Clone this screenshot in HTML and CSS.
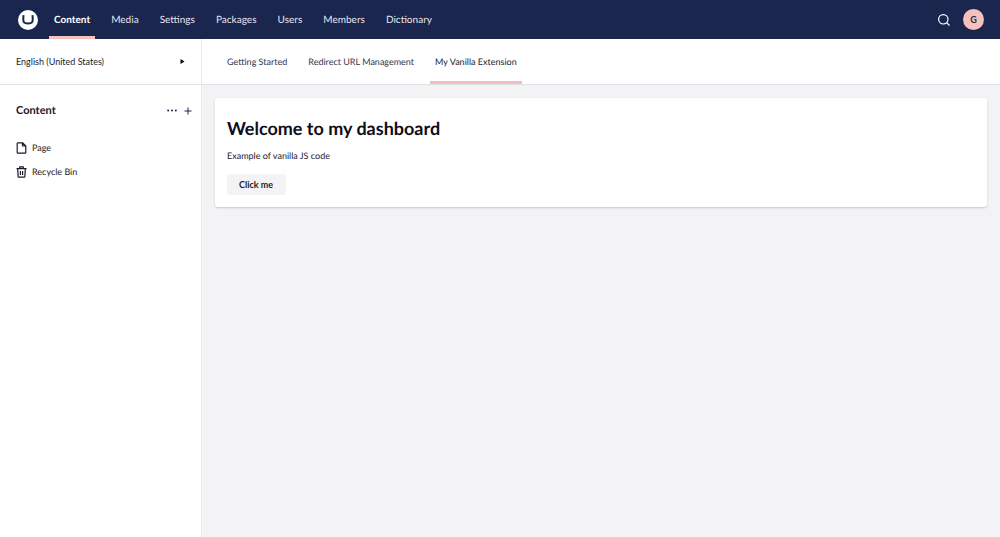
FILE: index.html
```html
<!DOCTYPE html>
<html lang="en">
<head>
<meta charset="utf-8">
<title>My Vanilla Extension</title>
<link rel="stylesheet" href="styles.css">
</head>
<body>
<header class="topbar">
  <a class="logo" href="#" aria-label="Home">
    <svg width="20" height="20" viewBox="0 0 20 20"><circle cx="10" cy="10" r="10" fill="#fff"/><path d="M5.500 5.200C4.800 12 5.300 13.500 10 13.500S15.200 12 14.500 5.200" fill="none" stroke="#1b264f" stroke-width="2"/></svg>
  </a>
  <nav class="sections">
    <a class="section active" href="#">Content</a>
    <a class="section" href="#">Media</a>
    <a class="section" href="#">Settings</a>
    <a class="section" href="#">Packages</a>
    <a class="section" href="#">Users</a>
    <a class="section" href="#">Members</a>
    <a class="section" href="#">Dictionary</a>
  </nav>
  <button class="icon-button search" aria-label="Search">
    <svg width="14" height="14" viewBox="0 0 14 14" fill="none" stroke="#fff" stroke-width="1.200"><circle cx="6.300" cy="6.300" r="4.700"/><path d="M9.700 9.700l2.800 2.800"/></svg>
  </button>
  <button class="avatar" aria-label="Account">G</button>
</header>
<div class="workspace">
  <aside class="sidebar">
    <button class="language"><span>English (United States)</span>
      <svg width="5" height="6" viewBox="0 0 5 6"><path d="M.5 0L4.500 2.500L.5 5z" fill="#060606"/></svg>
    </button>
    <div class="tree-head">
      <h2 class="tree-title">Content</h2>
      <button class="icon-button" aria-label="More actions"><svg width="10" height="10" viewBox="0 0 10 10" fill="#1b264f"><circle cx="1.200" cy="4.500" r="1"/><circle cx="5" cy="4.500" r="1"/><circle cx="8.800" cy="4.500" r="1"/></svg></button>
      <button class="icon-button" aria-label="Create"><svg width="8" height="8" viewBox="0 0 8 8" stroke="#1b264f"><path d="M4 0.500v7M0.500 4h7"/></svg></button>
    </div>
    <ul class="tree">
      <li><a class="node" href="#"><svg width="11" height="12" viewBox="0 0 11 12" fill="none" stroke="#1b1b2c" stroke-width="1.200" stroke-linejoin="round"><path d="M6.500 .8H2Q1.200.8 1.200 1.600v8.800q0 .8.800.8h7q.8 0 .8-.8V4zM6.500.8V4h3.300"/></svg>Page</a></li>
      <li><a class="node" href="#"><svg width="11" height="12" viewBox="0 0 11 12" fill="none" stroke="#1b1b2c" stroke-width="1.200" stroke-linejoin="round"><path d="M.5 2.700h10M3.700 2.700V.8h3.600v1.900M1.700 2.700l.4 7.700q0 .8.800.8h5.200q.8 0 .8-.8l.4-7.700M4.400 5v4M6.600 5v4"/></svg>Recycle Bin</a></li>
    </ul>
  </aside>
  <main class="main">
    <nav class="tabs">
      <a class="tab" href="#">Getting Started</a>
      <a class="tab" href="#">Redirect URL Management</a>
      <a class="tab active" href="#">My Vanilla Extension</a>
    </nav>
    <section class="box">
      <h1 class="box-title">Welcome to my dashboard</h1>
      <p class="box-text">Example of vanilla JS code</p>
      <button class="action">Click me</button>
    </section>
  </main>
</div>
</body>
</html>
```
FILE: styles.css
```css
* { box-sizing: border-box; }
body {
  margin: 0;
  min-height: 100vh;
  display: flex;
  flex-direction: column;
  font: 9px/16px Lato, "Open Sans", sans-serif;
  text-rendering: geometricPrecision;
  color: #1b1b2c;
  background: #f3f3f5;
}
a { color: inherit; text-decoration: none; }
button { font: inherit; color: inherit; border: 0; padding: 0; background: none; }
svg { display: block; flex: none; }
.topbar {
  display: flex;
  align-items: center;
  height: 39px;
  padding: 0 16px 0 18px;
  background: #1b264f;
  color: #dcdde4;
}
.sections { display: flex; align-self: stretch; flex: 1; margin-left: 11px; gap: 11px; }
.section {
  display: flex;
  align-items: center;
  padding: 0 5px;
  font-size: 10px;
  font-weight: 500;
  border-bottom: 3px solid transparent;
  border-top: 3px solid transparent;
}
.section.active { color: #fff; font-weight: 700; border-bottom-color: #f5c1bc; }
.search { margin-right: 12px; }
.avatar {
  width: 21px;
  height: 21px;
  border-radius: 50%;
  background: #f5c1bc;
  color: #1b264f;
  font-weight: 700;
  text-align: center;
}
.workspace { display: flex; flex: 1; }
.sidebar { width: 202px; flex: none; background: #fff; border-right: 1px solid #e9e9eb; }
.language {
  display: flex;
  align-items: center;
  justify-content: space-between;
  width: 100%;
  height: 46px;
  padding: 0 16px;
  border-bottom: 1px solid #e3e3e6;
}
.tree-head { display: flex; align-items: center; gap: 7px; padding: 17px 9px 16px 16px; }
.tree-title { flex: 1; margin: 0; font-size: 11px; line-height: 18px; font-weight: 700; }
.tree { list-style: none; margin: 0; padding: 0 16px; }
.node { display: flex; align-items: center; gap: 5px; height: 24px; }
.main { flex: 1; min-width: 0; }
.tabs {
  display: flex;
  gap: 11px;
  height: 46px;
  padding: 0 20px;
  background: #fff;
  border-bottom: 1px solid #e3e3e6;
  color: #34344f;
}
.tab {
  display: flex;
  align-items: center;
  padding: 0 5px;
  border-top: 3px solid transparent;
  border-bottom: 3px solid transparent;
}
.tab.active { color: #1b1b2c; border-bottom-color: #f3bcc4; }
.box {
  margin: 13px;
  padding: 18px 12px 12px;
  background: #fff;
  border-radius: 3px;
  box-shadow: 0 1px 2px #c9c9cd;
}
.box-title { margin: 0 0 8px; font-size: 18px; line-height: 24px; font-weight: 700; color: #0d0d1c; }
.box-text { margin: 0 0 10px; }
.action {
  height: 21px;
  padding: 0 13px 0 12px;
  border-radius: 3px;
  background: #f3f3f5;
  font-weight: 700;
}
```
